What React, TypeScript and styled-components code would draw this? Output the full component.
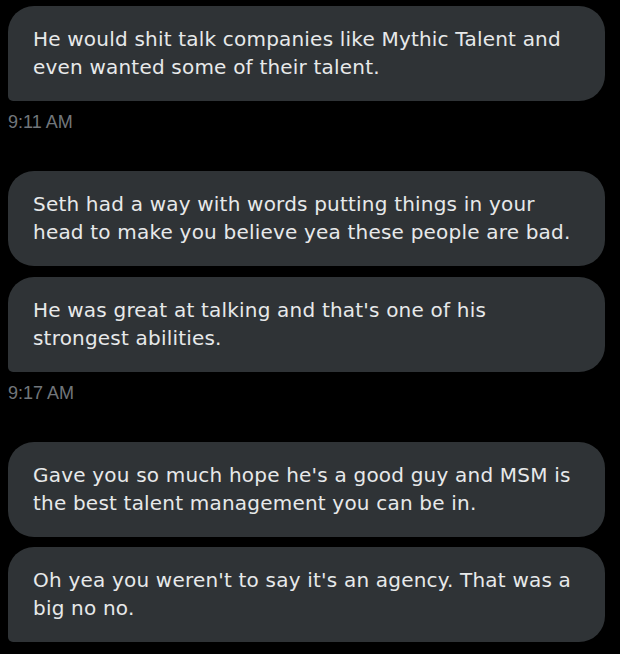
import React from "react";
import styled, { createGlobalStyle } from "styled-components";

const GlobalStyle = createGlobalStyle`
    html, body {
        margin: 0;
        padding: 0;
        background: #000;
    }
`;

interface Group {
    time: string;
    messages: string[][];
}

// each message is kept as the lines it shows in the conversation
const groups: Group[] = [
    {
        time: "9:11 AM",
        messages: [
            ["He would shit talk companies like Mythic Talent and", "even wanted some of their talent."],
        ],
    },
    {
        time: "9:17 AM",
        messages: [
            ["Seth had a way with words putting things in your", "head to make you believe yea these people are bad."],
            ["He was great at talking and that's one of his", "strongest abilities."],
        ],
    },
    {
        time: "",
        messages: [
            ["Gave you so much hope he's a good guy and MSM is", "the best talent management you can be in."],
            ["Oh yea you weren't to say it's an agency. That was a", "big no no."],
        ],
    },
];

export default () => (
    <Page>
        <GlobalStyle />
        {groups.map((group, gi) => (
            <MessageGroup key={gi}>
                <Bubbles>
                    {group.messages.map((lines, i) => (
                        <Bubble key={i} last={i === group.messages.length - 1}>
                            {lines.map((line, li) => (
                                <Line key={li}>{line}</Line>
                            ))}
                        </Bubble>
                    ))}
                </Bubbles>
                {group.time && <Timestamp>{group.time}</Timestamp>}
            </MessageGroup>
        ))}
    </Page>
);

const Page = styled.div`
    display: flex;
    flex-direction: column;
    gap: 37px;
    width: 597px;
    padding: 6px 15px 0 8px;
    min-height: 648px;
    background: #000;
`;

const MessageGroup = styled.div`
    display: flex;
    flex-direction: column;
    gap: 9px;
`;

const Bubbles = styled.div`
    display: flex;
    flex-direction: column;
    gap: 10.5px;
`;

const Bubble = styled.div<{ last: boolean }>`
    padding: 19px 25px 20px 25px;
    background: #2f3336;
    color: #e7e9ea;
    font-family: "DejaVu Sans", Verdana, sans-serif;
    font-size: 20px;
    letter-spacing: 0.2px;
    line-height: 28px;
    border-radius: 26px 26px 26px ${(props) => (props.last ? "5px" : "26px")};
`;

const Line = styled.div`
    white-space: nowrap;
`;

const Timestamp = styled.div`
    color: #71767b;
    font-family: "Liberation Sans", Arial, sans-serif;
    font-size: 18px;
    line-height: 24px;
`;
